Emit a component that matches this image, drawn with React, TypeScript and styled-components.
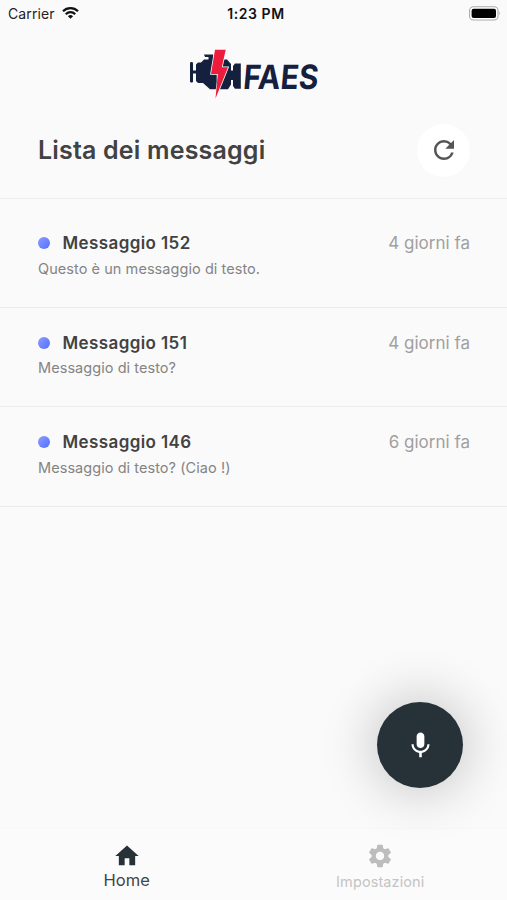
import React from "react";
import styled, { createGlobalStyle } from "styled-components";
import { MdHome, MdMic, MdRefresh, MdSettings } from "react-icons/md";

const GlobalStyle = createGlobalStyle`
  * { box-sizing: border-box; }
  body { margin: 0; background: #fafafa; font-family: Inter, "Liberation Sans", sans-serif; }
`;

const Screen = styled.div`
  position: relative;
  display: flex;
  flex-direction: column;
  width: 507px;
  height: 900px;
  overflow: hidden;
  background: #fafafa;
  color: #424242;
`;

const StatusBar = styled.div`
  display: grid;
  grid-template-columns: 1fr auto 1fr;
  align-items: center;
  height: 28px;
  padding: 0 6px 2px 8px;
  color: #111;
`;

const Carrier = styled.div`
  display: flex;
  align-items: center;
  gap: 7px;
  font-size: 14px;
  letter-spacing: 0.1px;
  color: #222;
`;

const Clock = styled.div`
  padding-left: 3px;
  font-size: 14px;
  font-weight: 600;
  letter-spacing: 0.55px;
`;

const BatterySlot = styled.div`
  display: flex;
  justify-content: flex-end;
`;

const LogoBar = styled.div`
  display: flex;
  justify-content: center;
  height: 80px;
  padding-top: 20px;
`;

const LogoSvg = styled.svg`
  display: block;
  overflow: visible;
`;

const Header = styled.header`
  display: flex;
  align-items: center;
  justify-content: space-between;
  height: 91px;
  padding: 0 37px 6px 38px;
  border-bottom: 1px solid #eeeeee;
`;

const Title = styled.h1`
  margin: 0;
  font-size: 25px;
  line-height: 30px;
  font-weight: 600;
  letter-spacing: 0.18px;
`;

const RefreshButton = styled.button`
  display: flex;
  align-items: center;
  justify-content: center;
  width: 53px;
  height: 53px;
  padding: 0;
  border: 0;
  border-radius: 50%;
  background: #fff;
  color: #555;
`;

const List = styled.ul`
  flex: 1;
  margin: 0;
  padding: 9px 0 0;
  list-style: none;
`;

const Item = styled.li`
  height: 99.6px;
  padding: 23px 37px 0 38px;
  border-bottom: 1px solid #ebebeb;
`;

const ItemTop = styled.div`
  display: flex;
  align-items: center;
  height: 24px;
`;

const Dot = styled.span`
  width: 12px;
  height: 12px;
  margin-right: 12.5px;
  border-radius: 50%;
  background: linear-gradient(135deg, #8c9eff, #536dfe);
`;

const ItemTitle = styled.span`
  flex: 1;
  font-size: 17px;
  font-weight: 600;
  letter-spacing: 0.4px;
`;

const Age = styled.span`
  font-size: 17px;
  letter-spacing: 0;
  color: #a0a0a0;
`;

const Preview = styled.p`
  margin: 3.5px 0 0;
  font-size: 14.5px;
  line-height: 20px;
  letter-spacing: 0.06px;
  color: #848484;
`;

const MicButton = styled.button`
  position: absolute;
  left: 377px;
  top: 702px;
  display: flex;
  align-items: center;
  justify-content: center;
  width: 86px;
  height: 86px;
  padding: 0;
  border: 0;
  border-radius: 50%;
  background: #263238;
  color: #fff;
  box-shadow: 0 0 50px 8px rgba(0, 0, 0, 0.18);
`;

const TabBar = styled.nav`
  display: grid;
  grid-template-columns: 1fr 1fr;
  height: 72px;
  background: #fbfbfb;
  border-top: 1px solid #f7f7f7;
`;

const Tab = styled.div<{ $active?: boolean }>`
  display: flex;
  flex-direction: column;
  align-items: center;
  padding-top: 13px;
  font-size: ${(p) => (p.$active ? "16.5px" : "14.5px")};
  line-height: ${(p) => (p.$active ? "20px" : "23px")};
  letter-spacing: 0.1px;
  color: ${(p) => (p.$active ? "#444" : "#c4c4c4")};

  svg { color: ${(p) => (p.$active ? "#263238" : "#bdbdbd")}; }
`;

const WifiIcon = () => (
  <svg width="17" height="12" viewBox="0 0 17 12">
    <g fill="none" stroke="#111" strokeWidth="2.2">
      <path d="M1 4.3C5.2 .1 11.8 .1 16 4.3" />
      <path d="M3.8 7.2C6.4 4.5 10.6 4.5 13.2 7.2" />
    </g>
    <path d="M5.9 9.2Q8.5 6.8 11.1 9.2L8.5 11.8Z" fill="#111" />
  </svg>
);

const BatteryIcon = () => (
  <svg width="32" height="15" viewBox="0 0 32 15">
    <rect x=".6" y=".8" width="28.4" height="13.2" rx="3.8" fill="#fff" stroke="#aaa" strokeWidth="1.1" />
    <rect x="2.6" y="2.7" width="24.4" height="9.4" rx="2" fill="#000" />
    <path d="M30.3 5.3Q32 7.4 30.3 9.5Z" fill="#999" />
  </svg>
);

const Logo = () => (
  <LogoSvg width="132" height="52" viewBox="188 48 132 52">
    <g fill="#15203f">
      <rect x="190" y="62" width="3" height="20.5" rx="1.3" />
      <path d="M192 70.5H196V64.5L198 62.5H201L204 59.5H208.5V57H205L204 54.5H213.5V59.5H227L231 64V70.5H233V66L235 63.5H240.8V88.7H235L233 86V80H231V84.5L228 89.3H210L203 83H198L196 81V73.5H192Z" />
    </g>
    <path d="M215 49.8H225.7L221.8 67.3H228L215.5 98.5L217.5 81.5V74H211Z" fill="#fafafa" stroke="#fafafa" strokeWidth="1.6" />
    <path d="M215 49.8H225.7L221.8 67.3H228L215.5 98.5L217.8 74H211Z" fill="#ed1c3c" />
    <g transform="translate(242.5 88.7) skewX(-5)">
      <text x="0" y="0" fill="#15203f" fontFamily="Inter" fontSize="33.5" fontWeight="700" textLength="75" lengthAdjust="spacingAndGlyphs">FAES</text>
    </g>
  </LogoSvg>
);

const messages = [
  { id: 152, text: "Questo è un messaggio di testo.", age: "4 giorni fa" },
  { id: 151, text: "Messaggio di testo?", age: "4 giorni fa" },
  { id: 146, text: "Messaggio di testo? (Ciao !)", age: "6 giorni fa" },
];

export default function App() {
  return (
    <Screen>
      <GlobalStyle />
      <StatusBar>
        <Carrier>Carrier <WifiIcon /></Carrier>
        <Clock>1:23 PM</Clock>
        <BatterySlot><BatteryIcon /></BatterySlot>
      </StatusBar>
      <LogoBar><Logo /></LogoBar>
      <Header>
        <Title>Lista dei messaggi</Title>
        <RefreshButton aria-label="Aggiorna"><MdRefresh size={30} /></RefreshButton>
      </Header>
      <List>
        {messages.map((m) => (
          <Item key={m.id}>
            <ItemTop>
              <Dot />
              <ItemTitle>Messaggio {m.id}</ItemTitle>
              <Age>{m.age}</Age>
            </ItemTop>
            <Preview>{m.text}</Preview>
          </Item>
        ))}
      </List>
      <TabBar>
        <Tab $active><MdHome size={28} />Home</Tab>
        <Tab><MdSettings size={28} />Impostazioni</Tab>
      </TabBar>
      <MicButton aria-label="Registra"><MdMic size={31} /></MicButton>
    </Screen>
  );
}
